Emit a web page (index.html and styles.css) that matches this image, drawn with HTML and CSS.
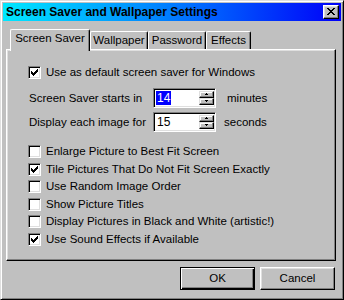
FILE: index.html
```html
<!DOCTYPE html>
<html>
<head>
<meta charset="utf-8">
<link rel="stylesheet" href="styles.css">
</head>
<body>
<div class="window">
  <div class="titlebar">
    <span class="title">Screen Saver and Wallpaper Settings</span>
    <span class="close"><svg width="8" height="7" viewBox="0 0 8 7" shape-rendering="crispEdges"><path d="M0 0h2v1h-2zM6 0h2v1h-2zM1 1h2v1h-2zM5 1h2v1h-2zM2 2h4v1h-4zM3 3h2v1h-2zM2 4h4v1h-4zM1 5h2v1h-2zM5 5h2v1h-2zM0 6h2v1h-2zM6 6h2v1h-2z" fill="#000"/></svg></span>
  </div>
  <div class="tabs">
    <div class="tab active">Screen Saver</div>
    <div class="tab tab-wall">Wallpaper</div>
    <div class="tab tab-pass">Password</div>
    <div class="tab tab-eff">Effects</div>
  </div>
  <div class="panel">
    <div class="check-row top-check"><span class="cb"><svg width="7" height="7" viewBox="0 0 7 7" shape-rendering="crispEdges"><path d="M6 0h1v1h-1zM5 1h2v1h-2zM0 2h1v1h-1zM4 2h3v1h-3zM0 3h2v1h-2zM3 3h3v1h-3zM0 4h5v1h-5zM1 5h3v1h-3zM2 6h1v1h-1z" fill="#000"/></svg></span><span>Use as default screen saver for Windows</span></div>
    <div class="spin-row first-spin">
      <span class="spin-label">Screen Saver starts in</span>
      <span class="spin"><span class="field"><span class="sel">14</span></span><span class="arrows"><span class="arr"><svg width="5" height="3" viewBox="0 0 5 3" shape-rendering="crispEdges"><path d="M2 0h1v1h-1zM1 1h3v1h-3z" fill="#000"/></svg></span><span class="arr"><svg width="5" height="3" viewBox="0 0 5 3" shape-rendering="crispEdges"><path d="M1 0h3v1h-3zM2 1h1v1h-1z" fill="#000"/></svg></span></span></span>
      <span class="unit unit-min">minutes</span>
    </div>
    <div class="spin-row second-spin">
      <span class="spin-label">Display each image for</span>
      <span class="spin"><span class="field"><span class="val">15</span></span><span class="arrows"><span class="arr"><svg width="5" height="3" viewBox="0 0 5 3" shape-rendering="crispEdges"><path d="M2 0h1v1h-1zM1 1h3v1h-3z" fill="#000"/></svg></span><span class="arr"><svg width="5" height="3" viewBox="0 0 5 3" shape-rendering="crispEdges"><path d="M1 0h3v1h-3zM2 1h1v1h-1z" fill="#000"/></svg></span></span></span>
      <span class="unit unit-sec">seconds</span>
    </div>
    <div class="check-list">
      <div class="check-row"><span class="cb"></span><span>Enlarge Picture to Best Fit Screen</span></div>
      <div class="check-row"><span class="cb"><svg width="7" height="7" viewBox="0 0 7 7" shape-rendering="crispEdges"><path d="M6 0h1v1h-1zM5 1h2v1h-2zM0 2h1v1h-1zM4 2h3v1h-3zM0 3h2v1h-2zM3 3h3v1h-3zM0 4h5v1h-5zM1 5h3v1h-3zM2 6h1v1h-1z" fill="#000"/></svg></span><span>Tile Pictures That Do Not Fit Screen Exactly</span></div>
      <div class="check-row"><span class="cb"></span><span>Use Random Image Order</span></div>
      <div class="check-row"><span class="cb"></span><span>Show Picture Titles</span></div>
      <div class="check-row"><span class="cb"></span><span>Display Pictures in Black and White (artistic!)</span></div>
      <div class="check-row"><span class="cb"><svg width="7" height="7" viewBox="0 0 7 7" shape-rendering="crispEdges"><path d="M6 0h1v1h-1zM5 1h2v1h-2zM0 2h1v1h-1zM4 2h3v1h-3zM0 3h2v1h-2zM3 3h3v1h-3zM0 4h5v1h-5zM1 5h3v1h-3zM2 6h1v1h-1z" fill="#000"/></svg></span><span>Use Sound Effects if Available</span></div>
    </div>
  </div>
  <div class="buttons">
    <span class="btn btn-default">OK</span>
    <span class="btn">Cancel</span>
  </div>
</div>
</body>
</html>
```

FILE: styles.css
```css
html, body {
  margin: 0;
  padding: 0;
  background: #c0c0c0;
}

body {
  font-family: "Liberation Sans", Arial, sans-serif;
  font-size: 11.5px;
  color: #000;
}

.window {
  width: 344px;
  height: 300px;
  box-sizing: border-box;
  background: #c0c0c0;
  border: 1px solid;
  border-color: #dfdfdf #000 #000 #dfdfdf;
  box-shadow: inset 1px 1px #fff, inset -1px -1px #808080;
  padding: 2px;
  display: flex;
  flex-direction: column;
}

.titlebar {
  height: 18px;
  display: flex;
  align-items: center;
  justify-content: space-between;
  padding: 0 2px 0 3px;
  background: linear-gradient(90deg, #00e8ff 0%, #0070ff 55%, #0000f8 100%);
}

.title {
  font-weight: bold;
  font-size: 12px;
  line-height: 14px;
  color: #000;
}

.close {
  width: 16px;
  height: 14px;
  box-sizing: border-box;
  background: #c0c0c0;
  border: 1px solid;
  border-color: #fff #000 #000 #fff;
  box-shadow: inset -1px -1px #808080, inset 1px 1px #dfdfdf;
  display: flex;
  align-items: center;
  justify-content: center;
  padding: 0 0 1px 0;
}

.tabs {
  height: 28px;
  display: flex;
  align-items: flex-end;
  padding-left: 7px;
  position: relative;
  z-index: 1;
}

.tab {
  box-sizing: border-box;
  height: 18px;
  background: #c0c0c0;
  border-left: 1px solid #fff;
  border-top: 1px solid #fff;
  border-right: 1px solid #000;
  box-shadow: inset -1px 0 #808080;
  border-radius: 2px 2px 0 0;
  text-align: center;
  line-height: 13px;
  padding-top: 2px;
  white-space: nowrap;
}

.tab.active {
  width: 80px;
  height: 22px;
  margin-bottom: -2px;
}

.tab-wall { width: 58px; }
.tab-pass { width: 58px; }
.tab-eff { width: 45px; }

.panel {
  margin-left: 3px;
  width: 330px;
  height: 212px;
  box-sizing: border-box;
  border: 1px solid;
  border-color: #fff #000 #000 #fff;
  box-shadow: inset -1px -1px #808080, inset 1px 1px #dfdfdf;
  padding-left: 21px;
  display: flex;
  flex-direction: column;
}

.check-row {
  height: 13px;
  display: flex;
  align-items: center;
  gap: 5px;
  line-height: 13px;
  white-space: nowrap;
}

.top-check {
  margin-top: 16px;
}

.cb {
  width: 13px;
  height: 13px;
  flex: none;
  box-sizing: border-box;
  background: #fff;
  border: 1px solid;
  border-color: #808080 #fff #fff #808080;
  box-shadow: inset 1px 1px #000, inset -1px -1px #dfdfdf;
  display: flex;
  padding: 2px 0 0 2px;
}

.spin-row {
  display: flex;
  align-items: center;
  height: 20px;
}

.first-spin { margin-top: 9px; }
.second-spin { margin-top: 4px; }

.spin-label {
  width: 124px;
  margin-left: 1px;
  white-space: nowrap;
}

.spin {
  width: 63px;
  height: 20px;
  box-sizing: border-box;
  background: #fff;
  border: 1px solid;
  border-color: #808080 #fff #fff #808080;
  box-shadow: inset 1px 1px #000, inset -1px -1px #dfdfdf;
  padding: 2px 1px 2px 2px;
  display: flex;
}

.field {
  flex: 1;
  display: flex;
  align-items: center;
  line-height: 14px;
}

.sel {
  background: #0000ff;
  color: #fff;
  padding: 0 1px 0 1px;
  font-size: 12px;
}

.val {
  padding: 0 1px;
  font-size: 12px;
}

.arrows {
  width: 15px;
  display: flex;
  flex-direction: column;
}

.arr {
  flex: 1;
  box-sizing: border-box;
  background: #c0c0c0;
  border: 1px solid;
  border-color: #dfdfdf #000 #000 #dfdfdf;
  box-shadow: inset -1px -1px #808080, inset 1px 1px #fff;
  display: flex;
  align-items: center;
  justify-content: center;
}

.unit-min { margin-left: 11px; }
.unit-sec { margin-left: 8px; }

.check-list {
  margin-top: 13px;
  display: flex;
  flex-direction: column;
  gap: 4.6px;
}

.buttons {
  display: flex;
  justify-content: flex-end;
  gap: 5px;
  margin-top: 6px;
  padding-right: 6px;
}

.btn {
  width: 75px;
  height: 23px;
  box-sizing: border-box;
  background: #c0c0c0;
  border: 1px solid;
  border-color: #fff #000 #000 #fff;
  box-shadow: inset -1px -1px #808080, inset 1px 1px #dfdfdf;
  display: flex;
  align-items: center;
  justify-content: center;
  line-height: 13px;
}

.btn-default {
  border-color: #000;
  box-shadow: inset 1px 1px #fff, inset -1px -1px #000, inset -2px -2px #808080;
}
```
